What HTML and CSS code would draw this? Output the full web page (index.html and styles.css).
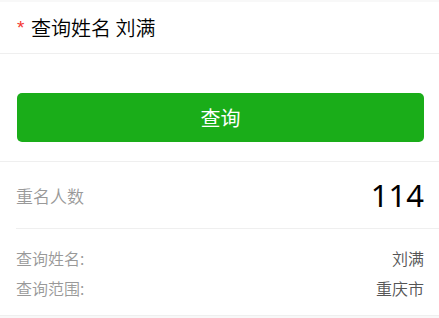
FILE: index.html
```html
<!DOCTYPE html>
<html lang="zh-CN">
<head>
<meta charset="utf-8">
<title>查询</title>
<link rel="stylesheet" href="styles.css">
</head>
<body>
<div class="page">
  <div class="field">
    <span class="req">*</span>
    <span class="field-text">查询姓名 刘满</span>
  </div>
  <div class="btn-area">
    <button class="btn-primary" type="button">查询</button>
  </div>
  <div class="result">
    <div class="count-row">
      <span class="count-label">重名人数</span>
      <span class="count-value">114</span>
    </div>
    <div class="details">
      <div class="detail-row">
        <span class="detail-label">查询姓名:</span>
        <span class="detail-value">刘满</span>
      </div>
      <div class="detail-row">
        <span class="detail-label">查询范围:</span>
        <span class="detail-value">重庆市</span>
      </div>
    </div>
  </div>
</div>
</body>
</html>
```
FILE: styles.css
```css
* { box-sizing: border-box; }
html, body {
  margin: 0;
  padding: 0;
  background: #f8f8f8;
  font-family: "Noto Sans CJK SC", "Noto Sans", sans-serif;
}
.page {
  margin-top: 2px;
  background: #fff;
}
.field {
  height: 52px;
  display: flex;
  align-items: center;
  padding: 0 15px 0 16px;
  border-bottom: 1px solid #efefef;
}
.req {
  color: #f43530;
  font-family: "Liberation Sans", sans-serif;
  font-size: 19px;
  line-height: 1;
  width: 15px;
  margin-top: -1px;
  padding-left: 1px;
}
.field-text {
  font-size: 20px;
  color: #000;
  line-height: 1;
  font-weight: 350;
}
.btn-area {
  padding: 39px 15px 19px 17px;
  border-bottom: 1px solid #efefef;
}
.btn-primary {
  display: block;
  width: 100%;
  height: 49px;
  border: 0;
  border-radius: 5px;
  background: #1aad19;
  color: #fff;
  font-family: "Noto Sans CJK SC", "Noto Sans", sans-serif;
  font-size: 20px;
  padding: 0;
}
.result {
  padding-left: 16px;
  border-bottom: 1px solid #efefef;
}
.count-row {
  height: 67px;
  display: flex;
  align-items: center;
  justify-content: space-between;
  padding-right: 15px;
  border-bottom: 1px solid #efefef;
}
.count-label {
  font-size: 17px;
  color: #999;
  font-weight: 350;
}
.count-value {
  font-family: "Noto Sans", sans-serif;
  font-size: 31px;
  color: #000;
}
.details {
  padding: 14px 15px 12px 0;
}
.detail-row {
  display: flex;
  justify-content: space-between;
  line-height: 30px;
  font-size: 16px;
  font-weight: 350;
}
.detail-label { color: #999; }
.detail-value { color: #555; }
```
